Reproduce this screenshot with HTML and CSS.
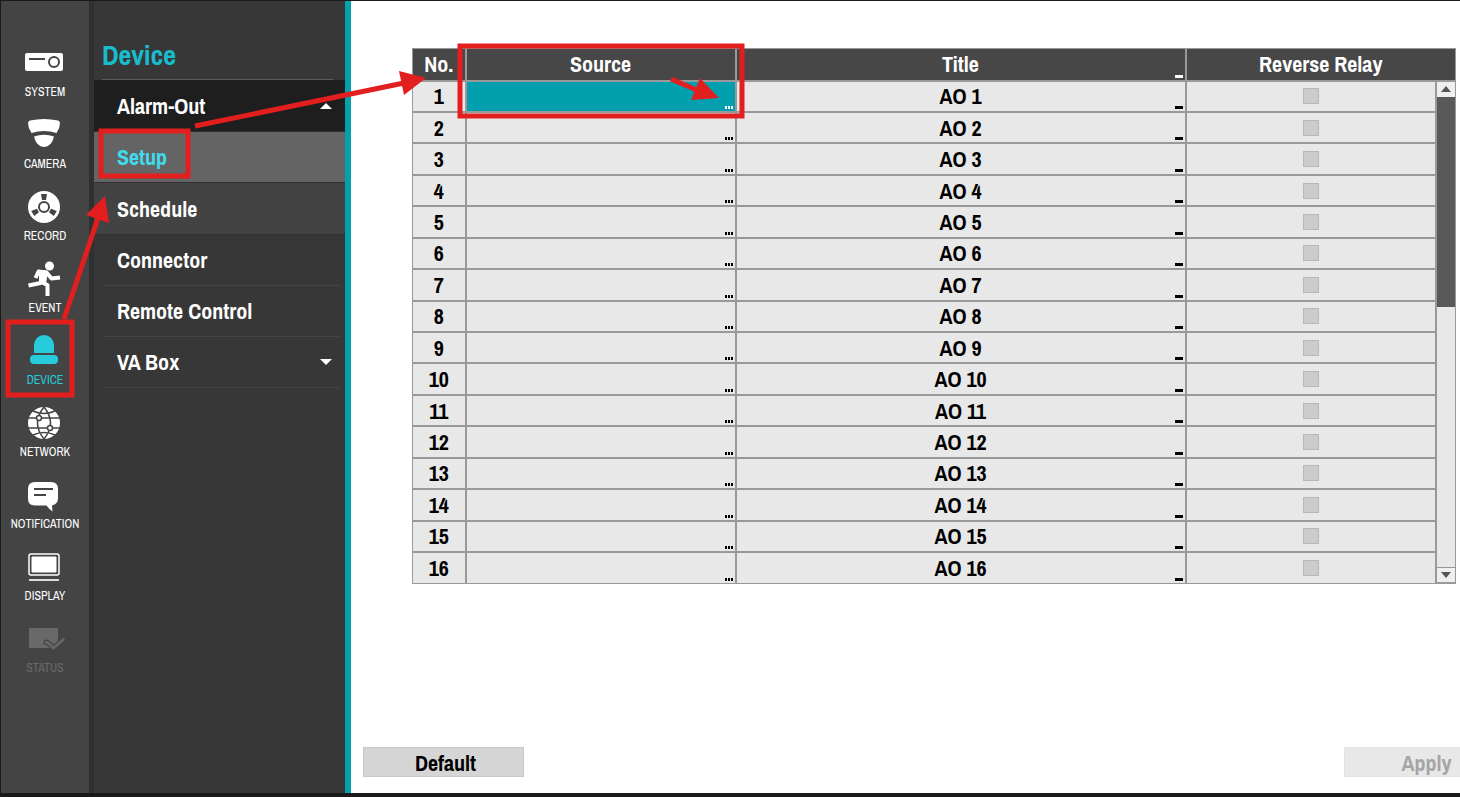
FILE: index.html
```
<!DOCTYPE html>
<html lang="en">
<head>
  <meta charset="UTF-8" />
  <meta name="viewport" content="width=device-width, initial-scale=1.0" />
  <title>Device - Alarm-Out Setup</title>
  <link rel="stylesheet" href="styles.css">
</head>
<body>
  <div class="app">

    <nav class="sidebar">
      <a href="#" class="side-item">
        <svg width="48" height="40" viewBox="0 0 48 40"><rect x="5" y="10" width="38" height="18" rx="2" fill="#fff"/><path d="M9 16h16" stroke="#444" stroke-width="2"/><circle cx="34" cy="19" r="5" fill="#fff" stroke="#444" stroke-width="2"/></svg>
        <span>SYSTEM</span>
      </a>
      <a href="#" class="side-item">
        <svg width="48" height="40" viewBox="0 0 48 40"><path d="M8 8q0-2 2-2.500q14-3 28 0q2 .5 2 2.500q0 5-3.500 10q-12.500-4-25 0q-3.500-5-3.500-10zM14 21.500q10-3.500 20 0q-2.500 10.500-10 10.500t-10-10.500z" fill="#fff"/></svg>
        <span>CAMERA</span>
      </a>
      <a href="#" class="side-item">
        <svg width="48" height="40" viewBox="0 0 48 40"><circle cx="24" cy="20" r="16" fill="#fff"/><circle cx="24" cy="20" r="5" fill="#fff" stroke="#444" stroke-width="2"/><g fill="#444"><path d="M21 7h6l-1 6h-4z"/><path d="M21 7h6l-1 6h-4z" transform="rotate(120 24 20)"/><path d="M21 7h6l-1 6h-4z" transform="rotate(240 24 20)"/></g></svg>
        <span>RECORD</span>
      </a>
      <a href="#" class="side-item">
        <svg width="48" height="40" viewBox="0 0 48 40"><circle cx="29.500" cy="7" r="4.500" fill="#fff"/><path d="M15.500 19l3-6.500 8 1 5 6 8.500-1M25 14l-4.500 10-12 2.500M21 23l6.500 3v11" fill="none" stroke="#fff" stroke-width="4" stroke-linejoin="round"/><path d="M19 11l9 1-2 13-7-1z" fill="#fff"/></svg>
        <span>EVENT</span>
      </a>
      <a href="#" class="side-item active">
        <svg width="48" height="40" viewBox="0 0 48 40"><path d="M14 22v-8a10 10 0 0 1 20 0v8z" fill="currentColor"/><rect x="10" y="24" width="28" height="9" rx="4" fill="currentColor"/></svg>
        <span>DEVICE</span>
      </a>
      <a href="#" class="side-item">
        <svg width="48" height="40" viewBox="0 0 48 40"><circle cx="24" cy="20" r="16" fill="#fff"/><g fill="none" stroke="#444" stroke-width="1.500"><path d="M8 15h32M8 25h32M24 4q-13 16 0 32M24 4q13 16 0 32M13 8q11 5 22 0M13 32q11-5 22 0"/><circle cx="19" cy="15" r="2.500" fill="#fff"/><circle cx="30" cy="25" r="2.500" fill="#fff"/></g></svg>
        <span>NETWORK</span>
      </a>
      <a href="#" class="side-item">
        <svg width="48" height="40" viewBox="0 0 48 40"><path d="M15 7h16q7 0 7 7v9q0 6-6 7.500l.5 6q-4-3-6-6h-11.500q-7 0-7-7v-9.500q0-7 7-7z" fill="#fff"/><path d="M14 14h19M14 20h12" stroke="#444" stroke-width="2"/></svg>
        <span>NOTIFICATION</span>
      </a>
      <a href="#" class="side-item">
        <svg width="48" height="40" viewBox="0 0 48 40"><rect x="9" y="7" width="30" height="21" rx="2" fill="none" stroke="#fff" stroke-width="1.500"/><rect x="11.500" y="9.500" width="25" height="16" rx="1" fill="#fff"/><path d="M9 33h30" stroke="#ddd" stroke-width="2"/></svg>
        <span>DISPLAY</span>
      </a>
      <a href="#" class="side-item disabled">
        <svg width="48" height="40" viewBox="0 0 48 40"><rect x="9" y="9" width="29" height="20" rx="1" fill="#696969"/><path d="M26 23.500q0-1 1.500 0l6 5.500 10-8.500" fill="none" stroke="#444" stroke-width="5" stroke-linecap="round"/><path d="M26 23.500q0-1 1.500 0l6 5.500 10-8.500" fill="none" stroke="#696969" stroke-width="2.500" stroke-linecap="round"/></svg>
        <span>STATUS</span>
      </a>
    </nav>

    <nav class="menu">
      <h1>Device</h1>
      <a href="#" class="menu-item open">Alarm-Out <span class="arrow up"></span></a>
      <a href="#" class="menu-item sub selected">Setup</a>
      <a href="#" class="menu-item sub">Schedule</a>
      <a href="#" class="menu-item">Connector</a>
      <a href="#" class="menu-item">Remote Control</a>
      <a href="#" class="menu-item">VA Box <span class="arrow down"></span></a>
    </nav>

    <main class="content">
      <table>
        <colgroup>
          <col class="col-no"><col class="col-source"><col class="col-title"><col class="col-relay"><col class="col-scroll">
        </colgroup>
        <thead>
          <tr>
            <th>No.</th>
            <th>Source</th>
            <th>Title<button class="edit" aria-label="Edit all titles"></button></th>
            <th colspan="2">Reverse Relay</th>
          </tr>
        </thead>
        <tbody id="rows"></tbody>
      </table>

      <footer class="actions">
        <button class="btn">Default</button>
        <button class="btn" disabled>Apply</button>
      </footer>
    </main>

    <!-- Step markers -->
    <svg class="marks" width="760" height="420" viewBox="0 0 760 420">
      <g fill="none" stroke="#e31e1e" stroke-width="5">
        <rect x="8" y="322" width="64" height="73"/>
        <rect x="101" y="131" width="87" height="45"/>
        <rect x="460" y="46" width="282" height="70"/>
        <path d="M64 319L98 218M195 126L404 83M671 79L699 91"/>
      </g>
      <g fill="#e31e1e">
        <path d="M105 196L109 223L86 215z"/>
        <path d="M426 78L404 95L399 71z"/>
        <path d="M719 98L691 100L700 78z"/>
      </g>
    </svg>
  </div>

  <script>
    const rows = document.getElementById('rows');
    const total = 16;

    for (let i = 1; i <= total; i++) {
      const tr = document.createElement('tr');
      tr.innerHTML = `
        <td>${i}</td>
        <td class="${i === 1 ? 'current' : ''}"><button class="more" aria-label="Select source ${i}"></button></td>
        <td>AO ${i}<button class="edit" aria-label="Edit title ${i}"></button></td>
        <td><input type="checkbox" aria-label="Reverse relay ${i}" disabled></td>`;

      // The scrollbar is one cell beside all the rows
      if (i === 1) {
        tr.innerHTML += `
          <td class="scroll" rowspan="${total}">
            <div class="track">
              <button class="step" aria-label="Scroll up"><span class="arrow up"></span></button>
              <div class="thumb"></div>
              <button class="step end" aria-label="Scroll down"><span class="arrow down"></span></button>
            </div>
          </td>`;
      }
      rows.appendChild(tr);
    }
  </script>
</body>
</html>
```
FILE: styles.css
```
* {
  margin: 0;
  padding: 0;
  box-sizing: border-box;
}

body {
  font-family: "Liberation Sans Narrow", "Archivo Narrow", "Liberation Sans", sans-serif;
  font-size: 22px;
  font-weight: bold;
  background-color: #fff;
}

a { color: inherit; text-decoration: none; }

button { border: 0; font: inherit; }

.app {
  position: relative;
  display: flex;
  min-height: 100vh;
  overflow: hidden;
  border: 1px solid #1a1a1a;
  border-width: 1px 0 4px 1px;
}

/* Icon bar */
.sidebar {
  flex: none;
  display: flex;
  flex-direction: column;
  gap: 14px;
  width: 93px;
  padding-top: 42px;
  background-color: #444;
  border-right: 5px solid #303030;
}

.side-item {
  display: flex;
  flex-direction: column;
  align-items: center;
  color: #fff;
  font-size: 12px;
  font-weight: normal;
  line-height: 18px;
}

.side-item svg { margin-right: 2px; }

.side-item.active { color: #27cbdc; }
.side-item.disabled { color: #696969; }

/* Menu */
.menu {
  flex: none;
  width: 257px;
  background-color: #373737;
  border-right: 6px solid #059fae;
  color: #fff;
}

.menu h1 {
  height: 79px;
  margin: 0 12px 0 8px;
  padding-top: 38px;
  border-bottom: 1px solid #5c5c5c;
  color: #17bccd;
  font-size: 28px;
  line-height: 32px;
}

.menu-item {
  display: flex;
  align-items: center;
  justify-content: space-between;
  height: 51px;
  margin: 0 5px 0 9px;
  padding: 0 8px 0 14px;
  border-bottom: 1px solid #444;
}

.menu-item.open,
.menu-item.sub {
  margin: 0;
  padding: 0 13px 0 23px;
  border-bottom-color: #303030;
}

.menu-item.open { height: 52px; background-color: #1e1e1e; }
.menu-item.sub { height: 51px; background-color: #434343; }
.menu-item.selected { background-color: #646464; color: #40dcec; }
.menu-item.selected + .sub { height: 52px; }

.arrow {
  border: 6px solid transparent;
  border-width: 0 6px;
}

.arrow.up { border-bottom: 6px solid; }
.arrow.down { border-top: 6px solid; }

/* Table */
.content {
  flex: 1;
  min-width: 0;
  display: flex;
  flex-direction: column;
  justify-content: space-between;
  padding: 47px 4px 16px 61px;
}

table {
  width: 100%;
  height: 536px;
  table-layout: fixed;
  border-collapse: collapse;
  border: 1px solid #999;
}

.col-no { width: 53px; }
.col-source { width: 270px; }
.col-title { width: 450px; }
.col-relay { width: 250px; }
.col-scroll { width: 20px; }

th, td {
  position: relative;
  border: 2px solid #999;
  text-align: center;
  vertical-align: middle;
  line-height: 26px;
}

th { height: 32px; border-top-width: 1px; background-color: #474747; color: #fff; }
td { background-color: #e8e8e8; color: #000; }
td.current { background-color: #02a0af; color: #fff; }

th:first-child, td:first-child { border-left-width: 1px; }
th:last-child, td.scroll { border-right-width: 1px; }
tr:last-child td { border-bottom-width: 1px; }

.more, .edit {
  position: absolute;
  right: 2px;
  bottom: 2px;
  width: 8px;
  height: 3px;
  color: inherit;
  background: currentColor;
}

.more {
  background: repeating-linear-gradient(to right, currentColor 0 2px, transparent 2px 3px);
}

input[type="checkbox"] {
  appearance: none;
  display: block;
  width: 16px;
  height: 16px;
  margin: 0 auto;
  border: 1px solid #b8b8b8;
  background-color: #ccc;
}

td.scroll { height: 1px; }

.track {
  display: flex;
  flex-direction: column;
  height: 100%;
}

.step {
  display: flex;
  align-items: center;
  justify-content: center;
  height: 15px;
  background-color: #efefef;
  color: #555;
}

.step .arrow { border-left-width: 5px; border-right-width: 5px; }
.step.end { margin-top: auto; border-top: 1px solid #999; }

.thumb { height: 42%; background-color: #595959; }

/* Bottom buttons, Apply runs past the window edge */
.actions {
  display: flex;
  justify-content: space-between;
  margin: 0 -49px;
}

.btn {
  width: 161px;
  height: 30px;
  padding: 0 0 2px 4px;
  border: 1px solid #c8c8c8;
  background-color: #d5d5d5;
  color: #000;
}

.btn:disabled {
  border-color: #e2e2e2;
  background-color: #e8e8e8;
  color: #a5a5a5;
}

.marks {
  position: absolute;
  top: -1px;
  left: -1px;
  pointer-events: none;
}
```
